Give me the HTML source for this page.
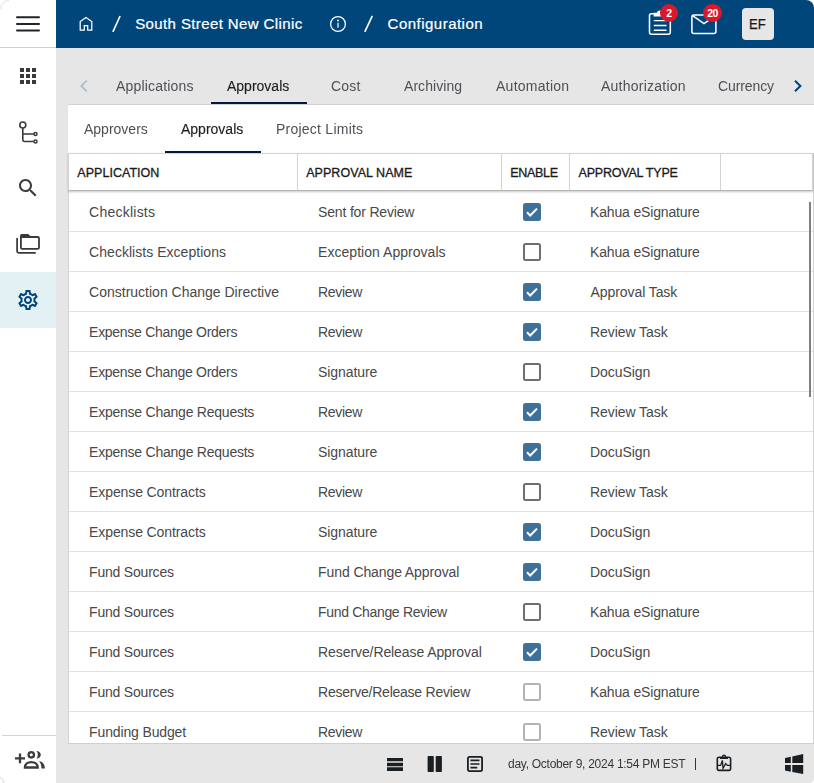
<!DOCTYPE html>
<html>
<head>
<meta charset="utf-8">
<title>Configuration</title>
<style>
*{box-sizing:border-box;margin:0;padding:0}
html,body{width:814px;height:783px;overflow:hidden;background:#fff}
body{font-family:"Liberation Sans",sans-serif;position:relative;color:#424242;-webkit-font-smoothing:antialiased}
.abs{position:absolute}
svg{position:absolute;display:block;overflow:visible}
.t{position:absolute;white-space:nowrap;line-height:20px;height:20px}
/* frame */
#bg{left:56px;top:48px;width:758px;height:735px;background:#e6e6e6;border-bottom-right-radius:5px}
#side{left:0;top:0;width:56px;height:783px;background:#fff}
#hdr{left:56px;top:0;width:758px;height:48px;background:#00467a;border-top-right-radius:8px}
#sideline{left:0;top:47px;width:56px;height:1px;background:#d0d0d0}
#sidebot{left:2px;top:735px;width:54px;height:1px;background:#d4d4d4}
#sel{left:0;top:272px;width:56px;height:56px;background:#e3f0f4}
/* header text */
.h{color:#fff;font-size:15px;line-height:24px;height:24px;top:12px;-webkit-text-stroke:.22px #fff}
.sl{color:#fff;font-size:21px;line-height:24px;height:24px;top:11px}
.badge{height:18px;border-radius:9px;background:#d9182d;color:#fff;font-size:10.500px;font-weight:700;line-height:18px;text-align:center;letter-spacing:-.5px}
#ava{left:742px;top:8px;width:32px;height:32px;border-radius:4px;background:#e6e6e6;color:#1a1a1a;font-size:14.500px;line-height:33px;text-align:center;-webkit-text-stroke:.25px #1a1a1a}
#ava span{display:inline-block;transform:scaleX(.9);transform-origin:50% 50%;margin-left:-1px}
/* tabs */
.tab{font-size:14px;top:76px;color:#4d5156;will-change:transform}
.tab.on{color:#1c1f22;-webkit-text-stroke:.15px #1c1f22}
#tabul{left:211px;top:102px;width:96px;height:2px;background:#001b3d}
/* panel */
#panel{left:68px;top:104px;width:746px;height:640px;background:#fff;border-top:1px solid #d2d2d2}
.st{font-size:14px;top:119px;color:#4d5156;will-change:transform}
.st.on{color:#1c1f22;-webkit-text-stroke:.15px #1c1f22}
#stul{left:165px;top:151px;width:96px;height:2px;background:#001b3d}
/* table */
#thead{left:68px;top:153px;width:745px;height:38px;background:#fff;border:1px solid #d3d3d3;border-bottom:1px solid #b4b4b4;box-shadow:0 1px 2px rgba(0,0,0,.22)}
.vl{top:154px;width:1px;height:36px;background:#d3d3d3}
.th{font-size:12.500px;top:163px;color:#1a1a1a;-webkit-text-stroke:.3px #1a1a1a}
#tleft{left:68px;top:153px;width:1px;height:590px;background:#d3d3d3}
#tright{left:813px;top:153px;width:1px;height:590px;background:#d3d3d3}
.rl{left:69px;width:744px;height:1px;background:#e2e2e2}
.c{font-size:14px;color:#484848}
.cb{width:18px;height:18px;border-radius:2.500px;left:523px}
.cb.on{background:#3d7199}
.cb.off{border:2px solid #6e6e6e;background:#fff}
.cb.dis{border:2px solid #b4b4b4;background:#fff}
#thumb{left:809px;top:202px;width:2px;height:195px;background:#808080}
/* status */
#status{left:56px;top:743px;width:758px;height:40px;background:#e6e6e6;border-bottom-right-radius:5px;border-top:1px solid #d0d0d0}
#statusl{left:56px;top:743px;width:12px;height:2px;background:#e6e6e6}
.sb{font-size:12px;top:754px;color:#33373b;will-change:transform}
</style>
</head>
<body>
<div class="abs" id="side"></div>
<div class="abs" id="sel"></div>
<div class="abs" id="sideline"></div>
<div class="abs" id="sidebot"></div>
<div class="abs" id="hdr"></div>
<div class="abs" id="bg"></div>
<div class="abs" id="panel"></div>
<!-- hamburger -->
<svg width="28" height="20" viewBox="14 14 28 20" style="left:14px;top:14px"><path d="M17 17.300h22M17 24h22M17 30.600h22" stroke="#1f2529" stroke-width="2" stroke-linecap="round" fill="none"/></svg>
<!-- apps grid -->
<svg width="24" height="24" viewBox="0 0 24 24" style="left:16px;top:64px"><path fill="#3a3a3a" d="M4 8h4V4H4v4zm6 12h4v-4h-4v4zm-6 0h4v-4H4v4zm0-6h4v-4H4v4zm6 0h4v-4h-4v4zm6-10v4h4V4h-4zm-6 4h4V4h-4v4zm6 6h4v-4h-4v4zm0 6h4v-4h-4v4z"/></svg>
<!-- tree -->
<svg width="24" height="24" viewBox="0 0 24 24" style="left:16px;top:120px"><g fill="none" stroke="#3a3a3a" stroke-width="1.600"><circle cx="6.800" cy="5" r="3"/><path d="M6.800 8v11.500a2 2 0 0 0 2 2H17.800M6.800 14H17.800"/><circle cx="19.500" cy="14" r="1.550" stroke-width="1.450"/><circle cx="19.500" cy="21.500" r="1.550" stroke-width="1.450"/></g></svg>
<!-- search -->
<svg width="24" height="24" viewBox="0 0 24 24" style="left:16px;top:176px"><path fill="#3a3a3a" d="M15.500 14h-.79l-.28-.27C15.410 12.590 16 11.110 16 9.500 16 5.910 13.090 3 9.500 3S3 5.910 3 9.500 5.910 16 9.500 16c1.610 0 3.090-.59 4.230-1.570l.27.280v.79l5 4.990L20.490 19l-4.990-5zm-6 0C7.010 14 5 11.990 5 9.500S7.010 5 9.500 5 14 7.010 14 9.500 11.990 14 9.500 14z"/></svg>
<!-- folder copy -->
<svg width="28" height="24" viewBox="14 232 28 24" style="left:14px;top:232px"><g fill="none" stroke="#3a3a3a"><path d="M17.100 238V251.200a1.600 1.600 0 0 0 1.600 1.600H35.800" stroke-width="1.750"/><rect x="20.900" y="237" width="18.100" height="11.900" rx="1.300" stroke-width="1.800"/></g><path fill="#3a3a3a" d="M20 237.800V235.700a1.700 1.700 0 0 1 1.700-1.700H28.200L30.600 236.300 31 237.800Z"/></svg>
<!-- settings -->
<svg width="24" height="24" viewBox="0 0 24 24" style="left:16px;top:288px"><path fill="#01457a" d="M19.430 12.980c.04-.32.070-.64.070-.98 0-.34-.03-.66-.07-.98l2.110-1.650c.19-.15.240-.42.120-.64l-2-3.460c-.09-.16-.26-.25-.44-.25-.06 0-.12.010-.17.030l-2.490 1c-.52-.4-1.080-.73-1.690-.98l-.38-2.650C14.460 2.180 14.250 2 14 2h-4c-.25 0-.46.180-.49.420l-.38 2.650c-.61.250-1.170.59-1.690.98l-2.490-1c-.06-.02-.12-.03-.18-.03-.17 0-.34.090-.43.250l-2 3.460c-.13.220-.07.490.12.640l2.110 1.650c-.04.320-.07.650-.07.980 0 .33.030.66.070.98l-2.110 1.650c-.19.150-.24.420-.12.640l2 3.460c.09.160.26.250.44.250.06 0 .12-.01.170-.03l2.490-1c.52.400 1.080.73 1.690.98l.38 2.650c.03.240.24.420.49.420h4c.25 0 .46-.18.490-.42l.38-2.650c.61-.25 1.170-.59 1.690-.98l2.490 1c.06.020.12.030.18.030.17 0 .34-.09.430-.25l2-3.460c.12-.22.070-.49-.12-.64l-2.110-1.650zm-1.980-1.710c.04.310.05.520.05.730 0 .21-.02.430-.05.730l-.14 1.130.89.700 1.080.84-.7 1.210-1.270-.51-1.040-.42-.9.680c-.43.320-.84.560-1.250.73l-1.060.43-.16 1.130-.2 1.350h-1.400l-.19-1.350-.16-1.130-1.060-.43c-.43-.18-.83-.41-1.230-.71l-.91-.7-1.060.43-1.270.51-.7-1.210 1.080-.84.890-.7-.14-1.130c-.03-.31-.05-.54-.05-.74s.02-.43.050-.73l.14-1.130-.89-.7-1.080-.84.700-1.210 1.270.51 1.040.42.900-.68c.43-.32.840-.56 1.250-.73l1.060-.43.160-1.130.2-1.350h1.390l.19 1.350.16 1.130 1.060.43c.43.180.83.410 1.230.71l.91.700 1.060-.43 1.270-.51.700 1.210-1.070.85-.89.700.14 1.130zM12 8c-2.210 0-4 1.790-4 4s1.790 4 4 4 4-1.790 4-4-1.790-4-4-4zm0 6c-1.100 0-2-.9-2-2s.9-2 2-2 2 .9 2 2-.9 2-2 2z"/></svg>
<!-- group add (mirrored) -->
<svg width="48" height="32" viewBox="8 743 48 32" style="left:8px;top:743px"><g fill="none" stroke="#3c3c3c" stroke-width="2.300"><path d="M15 758.400H25M20 753.600V763.300"/><circle cx="31.300" cy="754.800" r="2.700"/><path d="M24.900 767.500c0-3.500 3-5.400 6.400-5.400s6.400 1.900 6.400 5.400z"/></g><path fill="#3c3c3c" d="M36.500 750.900c2.500.1 4.300 1.800 4.300 3.900s-1.800 3.800-4.300 3.900c.9-1 1.300-2.300 1.300-3.900s-.4-2.900-1.300-3.900zM39 760.900c3.600.8 5.900 3.400 5.900 7.700h-3.400c0-3.300-.9-5.800-2.500-7.700z"/></svg>
<!-- window corners -->
<svg width="10" height="10" viewBox="0 0 10 10" style="left:0;top:0"><path d="M.5 9A8.500 8.500 0 0 1 9 .5" fill="none" stroke="#e2e2e2" stroke-width="1"/></svg>
<svg width="6" height="8" viewBox="0 775 6 8" style="left:0;top:775px"><path d="M0 777.500c2 0 3.300 2.500 4 5.500" fill="none" stroke="#d9d9d9" stroke-width="1"/></svg>

<!-- home -->
<svg width="16" height="16" viewBox="78 16 16 16" style="left:78px;top:16px"><path fill="none" stroke="#fff" stroke-width="1.250" d="M80.200 30.200V21.600L86 17.400l5.800 4.200v8.600H87.700V25.700H84.300v4.500Z"/></svg>
<svg width="12" height="18" viewBox="110 15 12 18" style="left:110px;top:15px"><path d="M112.900 31.800L120.100 16" stroke="#fff" stroke-width="1.650" fill="none"/></svg>
<div class="t h" style="left:135.200px;letter-spacing:.39px">South Street New Clinic</div>
<!-- info -->
<svg width="20" height="20" viewBox="328 14 20 20" style="left:328px;top:14px"><circle cx="338" cy="24" r="7.400" fill="none" stroke="#fff" stroke-width="1.250"/><path d="M338 22.800v5" stroke="#e4ecf3" stroke-width="1.350" fill="none"/><circle cx="338" cy="20.500" r=".9" fill="#fff"/></svg>
<svg width="12" height="18" viewBox="362 15 12 18" style="left:362px;top:15px"><path d="M364.800 31.900L372.300 15.900" stroke="#fff" stroke-width="1.650" fill="none"/></svg>
<div class="t h" style="left:387.600px;letter-spacing:.48px">Configuration</div>
<!-- clipboard -->
<svg width="30" height="30" viewBox="645 8 30 30" style="left:645px;top:8px"><rect x="649.500" y="13.800" width="20.800" height="20.500" rx="2" fill="none" stroke="#fff" stroke-width="1.550"/><path fill="#fff" d="M653.600 16.400v-3.600h3.200a3.200 3.200 0 0 1 6.200 0h3.200v3.600z"/><path d="M653.800 20.600h12.700M653.800 25.400h12.700M653.800 30.200h12.700" stroke="#fff" stroke-width="1.450" fill="none"/></svg>
<div class="abs badge" style="left:660px;top:4px;width:18px">2</div>
<!-- mail -->
<svg width="30" height="26" viewBox="689 11 30 26" style="left:689px;top:11px"><rect x="691.900" y="14.900" width="24" height="18.600" rx="2" fill="none" stroke="#fff" stroke-width="1.550"/><path d="M692.600 15.600L704 23.600l11.400-8" fill="none" stroke="#fff" stroke-width="1.550"/></svg>
<div class="abs badge" style="left:703px;top:4px;width:19px">20</div>
<div class="abs" id="ava"><span>EF</span></div>

<div class="t tab" style="left:116px;letter-spacing:0.182px;">Applications</div>
<div class="t tab on" style="left:227.4px;">Approvals</div>
<div class="t tab" style="left:331.3px;letter-spacing:0.2px;">Cost</div>
<div class="t tab" style="left:403.5px;letter-spacing:0.062px;">Archiving</div>
<div class="t tab" style="left:495.7px;letter-spacing:0.256px;">Automation</div>
<div class="t tab" style="left:601.3px;letter-spacing:0.242px;">Authorization</div>
<div class="t tab" style="left:718.3px;letter-spacing:-0.1px;">Currency</div>
<div class="abs" id="tabul"></div>
<svg width="8" height="12" viewBox="0 0 8 12" style="left:80px;top:80px"><path d="M6.800 .7L1.300 6l5.500 5.300" fill="none" stroke="#a9c0d1" stroke-width="1.800"/></svg>
<svg width="8" height="12" viewBox="0 0 8 12" style="left:794px;top:80px"><path d="M1 .7L6.400 6 1 11.300" fill="none" stroke="#01457a" stroke-width="2"/></svg>
<div class="t st" style="left:84px;">Approvers</div>
<div class="t st on" style="left:181.1px;">Approvals</div>
<div class="t st" style="left:276px;letter-spacing:0.238px;">Project Limits</div>
<div class="abs" id="stul"></div>
<div class="abs" id="tleft"></div><div class="abs" id="tright"></div>
<div class="t c" style="left:89.1px;top:202px;letter-spacing:0.233px;">Checklists</div>
<div class="t c" style="left:318.1px;top:202px;letter-spacing:-0.179px;">Sent for Review</div>
<div class="t c" style="left:590px;top:202px;letter-spacing:-0.16px;">Kahua eSignature</div>
<div class="abs cb on" style="top:203px"><svg width="18" height="18" viewBox="0 0 18 18" style="left:0;top:0"><path d="M4 9.3l3.2 3.2L14 5.6" fill="none" stroke="#fff" stroke-width="2"/></svg></div>
<div class="abs rl" style="top:231px"></div>
<div class="t c" style="left:89.1px;top:242px;letter-spacing:0.035px;">Checklists Exceptions</div>
<div class="t c" style="left:318.1px;top:242px;letter-spacing:0.033px;">Exception Approvals</div>
<div class="t c" style="left:590px;top:242px;letter-spacing:-0.16px;">Kahua eSignature</div>
<div class="abs cb off" style="top:243px"></div>
<div class="abs rl" style="top:271px"></div>
<div class="t c" style="left:89.1px;top:282px;letter-spacing:0px;">Construction Change Directive</div>
<div class="t c" style="left:318.1px;top:282px;letter-spacing:-0.34px;">Review</div>
<div class="t c" style="left:590.6px;top:282px;letter-spacing:-0.083px;">Approval Task</div>
<div class="abs cb on" style="top:283px"><svg width="18" height="18" viewBox="0 0 18 18" style="left:0;top:0"><path d="M4 9.3l3.2 3.2L14 5.6" fill="none" stroke="#fff" stroke-width="2"/></svg></div>
<div class="abs rl" style="top:311px"></div>
<div class="t c" style="left:89.1px;top:322px;letter-spacing:-0.285px;">Expense Change Orders</div>
<div class="t c" style="left:318.1px;top:322px;letter-spacing:-0.34px;">Review</div>
<div class="t c" style="left:590px;top:322px;letter-spacing:-0.06px;">Review Task</div>
<div class="abs cb on" style="top:323px"><svg width="18" height="18" viewBox="0 0 18 18" style="left:0;top:0"><path d="M4 9.3l3.2 3.2L14 5.6" fill="none" stroke="#fff" stroke-width="2"/></svg></div>
<div class="abs rl" style="top:351px"></div>
<div class="t c" style="left:89.1px;top:362px;letter-spacing:-0.285px;">Expense Change Orders</div>
<div class="t c" style="left:318.1px;top:362px;letter-spacing:-0.088px;">Signature</div>
<div class="t c" style="left:590px;top:362px;letter-spacing:-0.071px;">DocuSign</div>
<div class="abs cb off" style="top:363px"></div>
<div class="abs rl" style="top:391px"></div>
<div class="t c" style="left:89.1px;top:402px;letter-spacing:-0.236px;">Expense Change Requests</div>
<div class="t c" style="left:318.1px;top:402px;letter-spacing:-0.34px;">Review</div>
<div class="t c" style="left:590px;top:402px;letter-spacing:-0.06px;">Review Task</div>
<div class="abs cb on" style="top:403px"><svg width="18" height="18" viewBox="0 0 18 18" style="left:0;top:0"><path d="M4 9.3l3.2 3.2L14 5.6" fill="none" stroke="#fff" stroke-width="2"/></svg></div>
<div class="abs rl" style="top:431px"></div>
<div class="t c" style="left:89.1px;top:442px;letter-spacing:-0.236px;">Expense Change Requests</div>
<div class="t c" style="left:318.1px;top:442px;letter-spacing:-0.088px;">Signature</div>
<div class="t c" style="left:590px;top:442px;letter-spacing:-0.071px;">DocuSign</div>
<div class="abs cb on" style="top:443px"><svg width="18" height="18" viewBox="0 0 18 18" style="left:0;top:0"><path d="M4 9.3l3.2 3.2L14 5.6" fill="none" stroke="#fff" stroke-width="2"/></svg></div>
<div class="abs rl" style="top:471px"></div>
<div class="t c" style="left:89.1px;top:482px;letter-spacing:-0.106px;">Expense Contracts</div>
<div class="t c" style="left:318.1px;top:482px;letter-spacing:-0.34px;">Review</div>
<div class="t c" style="left:590px;top:482px;letter-spacing:-0.06px;">Review Task</div>
<div class="abs cb off" style="top:483px"></div>
<div class="abs rl" style="top:511px"></div>
<div class="t c" style="left:89.1px;top:522px;letter-spacing:-0.106px;">Expense Contracts</div>
<div class="t c" style="left:318.1px;top:522px;letter-spacing:-0.088px;">Signature</div>
<div class="t c" style="left:590px;top:522px;letter-spacing:-0.071px;">DocuSign</div>
<div class="abs cb on" style="top:523px"><svg width="18" height="18" viewBox="0 0 18 18" style="left:0;top:0"><path d="M4 9.3l3.2 3.2L14 5.6" fill="none" stroke="#fff" stroke-width="2"/></svg></div>
<div class="abs rl" style="top:551px"></div>
<div class="t c" style="left:89.1px;top:562px;letter-spacing:-0.209px;">Fund Sources</div>
<div class="t c" style="left:318.1px;top:562px;letter-spacing:-0.1px;">Fund Change Approval</div>
<div class="t c" style="left:590px;top:562px;letter-spacing:-0.071px;">DocuSign</div>
<div class="abs cb on" style="top:563px"><svg width="18" height="18" viewBox="0 0 18 18" style="left:0;top:0"><path d="M4 9.3l3.2 3.2L14 5.6" fill="none" stroke="#fff" stroke-width="2"/></svg></div>
<div class="abs rl" style="top:591px"></div>
<div class="t c" style="left:89.1px;top:602px;letter-spacing:-0.209px;">Fund Sources</div>
<div class="t c" style="left:318.1px;top:602px;letter-spacing:-0.329px;">Fund Change Review</div>
<div class="t c" style="left:590px;top:602px;letter-spacing:-0.16px;">Kahua eSignature</div>
<div class="abs cb off" style="top:603px"></div>
<div class="abs rl" style="top:631px"></div>
<div class="t c" style="left:89.1px;top:642px;letter-spacing:-0.209px;">Fund Sources</div>
<div class="t c" style="left:318.1px;top:642px;letter-spacing:-0.091px;">Reserve/Release Approval</div>
<div class="t c" style="left:590px;top:642px;letter-spacing:-0.071px;">DocuSign</div>
<div class="abs cb on" style="top:643px"><svg width="18" height="18" viewBox="0 0 18 18" style="left:0;top:0"><path d="M4 9.3l3.2 3.2L14 5.6" fill="none" stroke="#fff" stroke-width="2"/></svg></div>
<div class="abs rl" style="top:671px"></div>
<div class="t c" style="left:89.1px;top:682px;letter-spacing:-0.209px;">Fund Sources</div>
<div class="t c" style="left:318.1px;top:682px;letter-spacing:-0.238px;">Reserve/Release Review</div>
<div class="t c" style="left:590px;top:682px;letter-spacing:-0.16px;">Kahua eSignature</div>
<div class="abs cb dis" style="top:683px"></div>
<div class="abs rl" style="top:711px"></div>
<div class="t c" style="left:89.1px;top:722px;letter-spacing:-0.138px;">Funding Budget</div>
<div class="t c" style="left:318.1px;top:722px;letter-spacing:-0.34px;">Review</div>
<div class="t c" style="left:590px;top:722px;letter-spacing:-0.06px;">Review Task</div>
<div class="abs cb dis" style="top:723px"></div>
<div class="abs" id="thead"></div>
<div class="abs vl" style="left:297px"></div>
<div class="abs vl" style="left:501px"></div>
<div class="abs vl" style="left:569px"></div>
<div class="abs vl" style="left:720px"></div>
<div class="t th" style="left:77.3px;letter-spacing:0.03px;">APPLICATION</div>
<div class="t th" style="left:306.2px;letter-spacing:0.05px;">APPROVAL NAME</div>
<div class="t th" style="left:510.3px;letter-spacing:-0.32px;">ENABLE</div>
<div class="t th" style="left:578.5px;letter-spacing:-0.208px;">APPROVAL TYPE</div>
<div class="abs" id="thumb"></div>
<div class="abs" id="status"></div><div class="abs" id="statusl"></div>
<!-- 3 bars -->
<svg width="16" height="14" viewBox="0 0 16 14" style="left:387px;top:758px"><path fill="#1a1f23" d="M0 0h16v3.200H0zM0 4.800h16v3.400H0zM0 9.200h16v3.800H0z"/></svg>
<!-- 2 cols -->
<svg width="16" height="18" viewBox="427 755 16 18" style="left:427px;top:755px"><rect x="427.600" y="755.900" width="6.200" height="16.100" rx=".8" fill="#1a1f23"/><rect x="435.700" y="755.900" width="6.200" height="16.100" rx=".8" fill="#1a1f23"/></svg>
<!-- article -->
<svg width="20" height="20" viewBox="465 754 20 20" style="left:465px;top:754px"><g fill="none" stroke="#1a1f23"><rect x="467.900" y="756.900" width="14.200" height="14.200" rx="1.800" stroke-width="1.800"/><path d="M470.400 760.300h9.100M470.400 764h9.100M470.400 767.700h6.900" stroke-width="1.700"/></g></svg>
<div class="t sb" style="left:508px;letter-spacing:-.268px">day, October 9, 2024 1:54 PM EST</div>
<div class="abs" style="left:695px;top:758px;width:1px;height:12px;background:#333"></div>
<!-- clipboard pulse -->
<svg width="20" height="20" viewBox="714 753 20 20" style="left:714px;top:753px"><g fill="none" stroke="#1a1f23"><rect x="717.300" y="757.200" width="13.300" height="13.200" rx="1.800" stroke-width="1.600"/><circle cx="724" cy="756.700" r="1.500" stroke-width="1.300"/><path d="M720 758.100h8" stroke-width="1.800"/><path d="M717.500 765.400H720.600L722.400 760.400 723 768.300 725.600 763.600 727.400 765.400H730.500" stroke-width="1.300" stroke-linejoin="miter"/></g></svg>
<!-- windows -->
<svg width="22" height="24" viewBox="783 752 22 24" style="left:783px;top:752px"><path fill="#1a1f23" d="M785 757.900L790.800 756.700V762.900H785ZM792.300 756.400L803.200 754V762.900H792.300ZM785 765H790.800V771.700L785 770.600ZM792.300 765H803.200V773.900L792.300 771.900Z"/></svg>

</body>
</html>
